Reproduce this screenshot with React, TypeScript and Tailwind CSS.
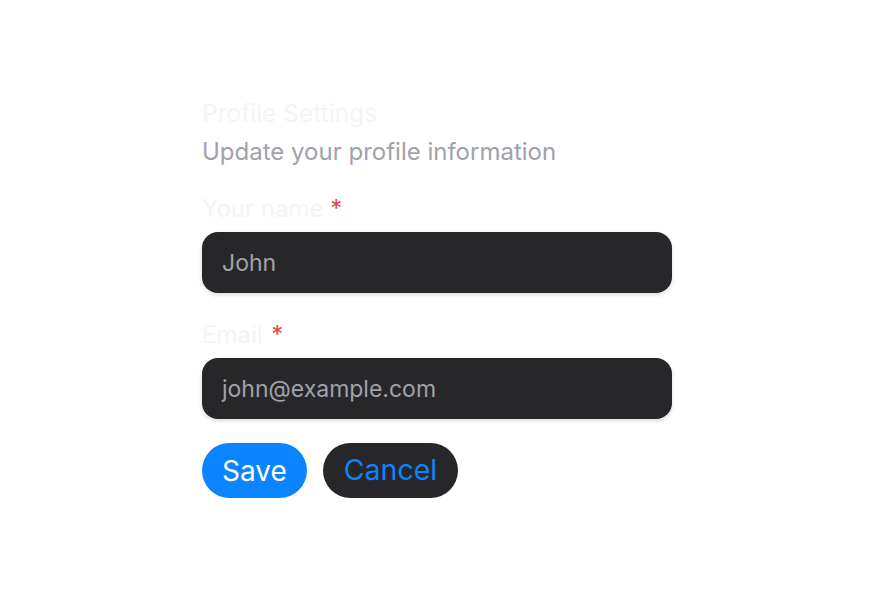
import React from "react";

export default function App() {
  return (
    <div className="min-h-screen w-full bg-white flex justify-center" style={{ fontFamily: "Inter, 'Noto Sans', sans-serif" }}>
      <div className="w-[470px] pt-[99px] flex flex-col">
        <h1 className="text-[24.5px] leading-[28px] text-[#f4f4f5] font-normal">Profile Settings</h1>
        <p className="mt-[11px] text-[24px] leading-[28px] text-[#a1a1aa]">Update your profile information</p>
        <label className="mt-[29px] text-[24px] leading-[28px] text-[#f4f4f5]">
          Your name <span className="text-[#e5484d]">*</span>
        </label>
        <div className="mt-[9px] h-[61px] rounded-[16px] bg-[#27272a] shadow-[0_2px_4px_rgba(0,0,0,0.15)] flex items-center px-[20px] pt-[2px] text-[23px] text-[#a1a1aa]">
          John
        </div>
        <label className="mt-[28px] text-[24px] leading-[28px] text-[#f4f4f5]">
          Email <span className="ml-[2px] text-[#e5484d]">*</span>
        </label>
        <div className="mt-[9px] h-[61px] rounded-[16px] bg-[#27272a] shadow-[0_2px_4px_rgba(0,0,0,0.15)] flex items-center px-[20px] pt-[2px] text-[23px] text-[#a1a1aa]">
          john@example.com
        </div>
        <div className="mt-[24px] flex gap-[16px]">
          <button className="h-[55px] px-[20px] rounded-full bg-[#0a84ff] text-white text-[28px]">Save</button>
          <button className="h-[55px] px-[21px] rounded-full bg-[#27272a] text-[#0a84ff] text-[28.5px]">Cancel</button>
        </div>
      </div>
    </div>
  );
}
